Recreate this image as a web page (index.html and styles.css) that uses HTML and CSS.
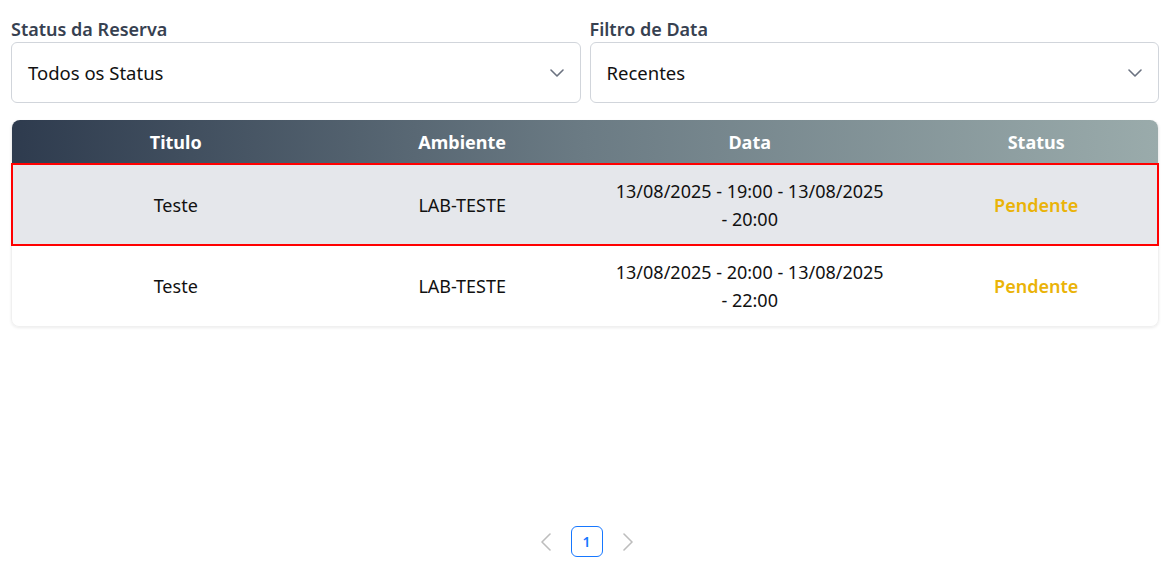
FILE: index.html
```html
<!DOCTYPE html>
<html lang="pt">
<head>
<meta charset="utf-8">
<link rel="stylesheet" href="styles.css">
</head>
<body>
<div class="page">
  <div class="filters">
    <div class="field">
      <label class="label">Status da Reserva</label>
      <div class="select">
        <span>Todos os Status</span>
        <svg class="chev" width="14" height="8" viewBox="0 0 14 8"><path d="M1 1l6 6 6-6" fill="none" stroke="#6b7280" stroke-width="1.6" stroke-linecap="round" stroke-linejoin="round"/></svg>
      </div>
    </div>
    <div class="field">
      <label class="label">Filtro de Data</label>
      <div class="select">
        <span>Recentes</span>
        <svg class="chev" width="14" height="8" viewBox="0 0 14 8"><path d="M1 1l6 6 6-6" fill="none" stroke="#6b7280" stroke-width="1.6" stroke-linecap="round" stroke-linejoin="round"/></svg>
      </div>
    </div>
  </div>

  <div class="table">
    <div class="row head">
      <div class="cell">Titulo</div>
      <div class="cell">Ambiente</div>
      <div class="cell">Data</div>
      <div class="cell">Status</div>
    </div>
    <div class="row body selected">
      <div class="cell">Teste</div>
      <div class="cell">LAB-TESTE</div>
      <div class="cell date">13/08/2025 - 19:00 - 13/08/2025 - 20:00</div>
      <div class="cell status">Pendente</div>
    </div>
    <div class="row body">
      <div class="cell">Teste</div>
      <div class="cell">LAB-TESTE</div>
      <div class="cell date">13/08/2025 - 20:00 - 13/08/2025 - 22:00</div>
      <div class="cell status">Pendente</div>
    </div>
  </div>

  <div class="pagination">
    <svg class="pg-arrow" width="12" height="18" viewBox="0 0 12 18"><path d="M10 1L2 9l8 8" fill="none" stroke="#bdbdbd" stroke-width="1.6" stroke-linecap="round" stroke-linejoin="round"/></svg>
    <div class="pg-item">1</div>
    <svg class="pg-arrow" width="12" height="18" viewBox="0 0 12 18"><path d="M2 1l8 8-8 8" fill="none" stroke="#bdbdbd" stroke-width="1.6" stroke-linecap="round" stroke-linejoin="round"/></svg>
  </div>
</div>
</body>
</html>
```

FILE: styles.css
```css
html, body {
  margin: 0;
  padding: 0;
  background: #ffffff;
}
body {
  font-family: "Noto Sans", "Open Sans", sans-serif;
  color: #111111;
}
.page {
  height: 565px;
  box-sizing: border-box;
  padding: 16px 9px 0 11px;
  display: flex;
  flex-direction: column;
}
.filters {
  display: flex;
  gap: 9px;
}
.field {
  flex: 1;
  display: flex;
  flex-direction: column;
}
.label {
  font-size: 18px;
  font-weight: 600;
  color: #374151;
  line-height: 26px;
}
.select {
  height: 61px;
  box-sizing: border-box;
  border: 1px solid #d1d5db;
  border-radius: 6px;
  display: flex;
  align-items: center;
  justify-content: space-between;
  padding: 0 16px 0 16px;
  font-size: 18.5px;
  color: #111111;
}
.table {
  margin-top: 17px;
  border-radius: 8px;
  box-shadow: 0 1px 3px rgba(0,0,0,0.08);
  border: 1px solid #f0f0f0;
  border-top: none;
}
.row {
  display: grid;
  grid-template-columns: 328fr 246fr 330fr 244fr;
  align-items: center;
}
.head {
  height: 44px;
  border-radius: 8px 8px 0 0;
  background: linear-gradient(90deg, #2e3b4e 0%, #6b7b84 50%, #9aabab 100%);
  color: #ffffff;
  font-weight: 700;
  font-size: 18px;
}
.body {
  height: 81px;
  font-size: 18px;
  line-height: 28px;
}
.selected {
  background: #e5e7eb;
  outline: 2px solid #ff0000;
  outline-offset: -1px;
}
.cell {
  text-align: center;
  padding: 0 20px;
}
.date {
  padding: 0 28px;
}
.status {
  color: #eab308;
  font-weight: 600;
}
.pagination {
  margin-top: auto;
  margin-bottom: 8px;
  display: flex;
  justify-content: center;
  align-items: center;
  gap: 19px;
  padding-left: 3px;
}
.pg-item {
  width: 32px;
  height: 31px;
  box-sizing: border-box;
  border: 1px solid #1677ff;
  border-radius: 6px;
  color: #1677ff;
  font-size: 14px;
  font-weight: 600;
  display: flex;
  align-items: center;
  justify-content: center;
}
```
